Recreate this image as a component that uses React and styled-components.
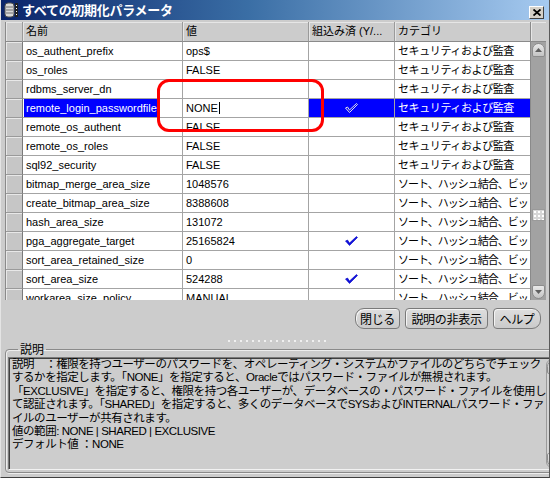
import React from 'react';
import styled, { createGlobalStyle } from 'styled-components';

const FONT = `"Liberation Sans", "Noto Sans CJK JP", sans-serif`;
const COLS = '17px 160px 126px 86px 136px';

const GlobalStyle = createGlobalStyle`
  html, body {
    margin: 0;
    padding: 0;
    background: #cccccc;
  }
  body {
    font-family: ${FONT};
  }
`;

const Window = styled.div`
  width: 550px;
  height: 478px;
  box-sizing: border-box;
  border: 1px solid;
  border-top: 0;
  border-color: #e4e4e4 #5a5a5a #404040 #e4e4e4;
  background: #cccccc;
  display: flex;
  flex-direction: column;
  overflow: hidden;
  font-family: ${FONT};
  position: relative;
`;

const TitleBar = styled.div`
  height: 20px;
  flex: none;
  display: flex;
  align-items: center;
  gap: 3px;
  padding: 0 5px 0 3px;
  background: linear-gradient(to right, #0a246a 0%, #3a6ea5 45%, #a6caf0 100%);
`;

const TitleText = styled.span`
  flex: 1;
  color: #ffffff;
  font-family: "Noto Sans CJK JP", sans-serif;
  font-weight: 700;
  font-size: 13px;
  line-height: 20px;
  letter-spacing: -0.3px;
`;

const CloseButton = styled.div`
  align-self: flex-end;
  margin-bottom: 1px;
  width: 15px;
  height: 13px;
  box-sizing: border-box;
  background: #d4d0c8;
  border: 1px solid;
  border-color: #ffffff #404040 #404040 #ffffff;
  display: flex;
  align-items: center;
  justify-content: center;
`;

const Body = styled.div`
  flex: 1;
  display: flex;
  flex-direction: column;
  padding: 2px 3px 0 4px;
`;

const TableArea = styled.div`
  height: 278px;
  flex: none;
  display: flex;
  border-left: 1px solid #8a8a8a;
`;

const Grid = styled.div`
  width: 525px;
  overflow: hidden;
  background: #cccccc;
`;

const Row = styled.div`
  display: grid;
  grid-template-columns: ${COLS};
  height: ${p => (p.$header ? 20 : 19)}px;
`;

const HeaderCell = styled.div`
  box-sizing: border-box;
  background: #cccccc;
  border-right: 1px solid #9a9a9a;
  border-bottom: 1px solid #8a8a8a;
  box-shadow: inset 1px 1px 0 #e6e6e6;
  padding: 0 3px;
  font-size: 11px;
  line-height: 19px;
  color: #000;
  white-space: nowrap;
  overflow: hidden;
`;

const RowHead = styled.div`
  box-sizing: border-box;
  background: #c6c6c6;
  border-right: 1px solid #7a7a7a;
  border-bottom: 1px solid #9a9a9a;
  box-shadow: inset 1px 1px 0 #e8e8e8;
`;

const Cell = styled.div`
  box-sizing: border-box;
  background: ${p => (p.$selected ? '#0000ff' : '#ffffff')};
  color: ${p => (p.$selected ? '#ffffff' : '#000000')};
  border-right: 1px solid #a4a4a4;
  border-bottom: 1px solid #a4a4a4;
  padding: 0 3px;
  font-size: 11px;
  line-height: 18px;
  letter-spacing: ${p => p.$spacing || 0}px;
  white-space: nowrap;
  overflow: hidden;
  display: flex;
  align-items: center;
  justify-content: ${p => (p.$center ? 'center' : 'flex-start')};
`;

const Highlight = styled.span`
  background: #0000ff;
  color: #ffffff;
  margin-left: -2px;
  padding: 0 2px 0 2px;
  line-height: 18px;
`;

const Caret = styled.span`
  display: inline-block;
  width: 1px;
  height: 12px;
  background: #000;
  margin-left: 1px;
`;

const ScrollBar = styled.div`
  width: 15px;
  display: flex;
  flex-direction: column;
  background: #a2a2a2;
  border-left: 1px solid #8a8a8a;
`;

const ScrollCorner = styled.div`
  height: 20px;
  flex: none;
  box-sizing: border-box;
  background: #cccccc;
  border-bottom: 1px solid #8a8a8a;
  box-shadow: inset 1px 1px 0 #e6e6e6;
`;

const ScrollTrack = styled.div`
  flex: 1;
  display: flex;
  flex-direction: column;
  align-items: center;
  padding: 1px 0;
`;

const ScrollButton = styled.div`
  width: 13px;
  height: 14px;
  flex: none;
  box-sizing: border-box;
  border-radius: ${p => (p.$down ? '2px 2px 7px 7px' : '7px 7px 2px 2px')};
  background: linear-gradient(#e8e8e8, #c4c4c4);
  border: 1px solid #8c8c8c;
  display: flex;
  align-items: center;
  justify-content: center;
  margin-top: ${p => (p.$down ? 'auto' : '0')};
`;

const Thumb = styled.div`
  width: 13px;
  height: 12px;
  flex: none;
  margin-top: ${p => p.$offset}px;
  box-sizing: border-box;
  background: #d6d6d6;
  border: 1px solid #9a9a9a;
  background-image: radial-gradient(circle, #ffffff 0.8px, transparent 1px);
  background-size: 4px 4px;
`;

const ButtonBar = styled.div`
  display: flex;
  justify-content: flex-end;
  gap: 5px;
  margin-top: 8px;
  padding-right: 5px;
`;

const PillButton = styled.button`
  width: ${p => p.$width}px;
  height: 21px;
  padding: 0;
  box-sizing: border-box;
  font-family: "Noto Sans CJK JP", sans-serif;
  font-size: 12px;
  line-height: 18px;
  letter-spacing: -0.3px;
  color: #000;
  background: linear-gradient(#dedede, #cacaca);
  border: 1px solid #7a7a7a;
  border-radius: ${p => p.$radius};
  box-shadow: inset 1px 1px 0 #f4f4f4;
  cursor: default;
`;

const Splitter = styled.div`
  align-self: center;
  width: 100px;
  height: 2px;
  margin-top: 11px;
  background-image: radial-gradient(circle, #f0f0f0 0.9px, transparent 1.1px);
  background-size: 6px 2px;
`;

const Group = styled.fieldset`
  margin: 0 0 4px 0;
  padding: 0 2px 2px 2px;
  flex: 1;
  border: 1px solid #8a8a8a;
  border-radius: 4px;
  box-shadow: 1px 1px 0 #eeeeee, inset 1px 1px 0 #eeeeee;
  display: flex;
  min-height: 0;
`;

const Legend = styled.legend`
  margin-left: 10px;
  padding: 0 2px;
  font-family: "Noto Sans CJK JP", sans-serif;
  font-size: 12px;
  line-height: 14px;
  color: #000;
`;

const TextBox = styled.div`
  flex: 1;
  display: flex;
  box-sizing: border-box;
  border: 1px solid;
  border-color: #7a7a7a #f2f2f2 #f2f2f2 #7a7a7a;
  box-shadow: inset 1px 1px 0 #404040;
  background: #cdcdcd;
  margin-top: 1px;
  min-height: 0;
`;

const TextContent = styled.div`
  flex: 1;
  padding: 0 0 0 3px;
  font-size: 11.5px;
  line-height: 13.4px;
  letter-spacing: -0.45px;
  white-space: pre;
  overflow: hidden;
  color: #000;
`;

const TextScroll = styled.div`
  width: 15px;
  margin: 1px 1px 1px 0;
  box-sizing: border-box;
  border: 1px solid #9a9a9a;
  border-radius: 6px;
  background: #d4d4d4;
  display: flex;
  flex-direction: column;
  align-items: center;
  justify-content: space-between;
`;

const GripDots = styled.div`
  width: 8px;
  height: 16px;
  background-image: radial-gradient(circle, #f8f8f8 0.9px, transparent 1.2px);
  background-size: 4px 5px;
`;

const RedMark = styled.div`
  position: absolute;
  left: 156px;
  top: 79px;
  width: 167px;
  height: 53px;
  box-sizing: border-box;
  border: 3px solid #ff0000;
  border-radius: 12px;
  pointer-events: none;
`;

function Arrow({ down }) {
  return (
    <svg width="7" height="4" viewBox="0 0 7 4">
      <path d={down ? 'M0 0 L7 0 L3.5 4 Z' : 'M0 4 L7 4 L3.5 0 Z'} fill="#606060" />
    </svg>
  );
}

function Check({ outline }) {
  return (
    <svg width="13" height="10" viewBox="0 0 13 10">
      <path
        d="M0.5 5 L2.5 4 L4.5 7 L11.5 0.5 L12.5 1.5 L4.5 9.5 Z"
        fill={outline ? 'none' : '#1010e0'}
        stroke={outline ? '#e0e0e0' : '#0000c0'}
        strokeWidth={outline ? 1 : 0.6}
        strokeLinejoin="round"
      />
    </svg>
  );
}

function AppIcon() {
  return (
    <svg width="15" height="16" viewBox="0 0 15 16">
      <rect x="1" y="1" width="9" height="14" rx="3" fill="#d8d8d8" stroke="#505050" />
      <path d="M2 5 H9 M2 8 H9 M2 11 H9" stroke="#707070" />
      <rect x="11" y="1" width="3" height="14" fill="#202020" />
      <path d="M12.5 3 V4 M12.5 6 V7 M12.5 9 V10 M12.5 12 V13" stroke="#ffffff" />
    </svg>
  );
}

const SEC = 'セキュリティおよび監査';
const SORT = 'ソート、ハッシュ結合、ビッ';

const rows = [
  { name: 'os_authent_prefix', value: 'ops$', cat: SEC },
  { name: 'os_roles', value: 'FALSE', cat: SEC },
  { name: 'rdbms_server_dn', value: '', cat: SEC },
  { name: 'remote_login_passwordfile', value: 'NONE', cat: SEC, selected: true, builtIn: true },
  { name: 'remote_os_authent', value: 'FALSE', cat: SEC },
  { name: 'remote_os_roles', value: 'FALSE', cat: SEC },
  { name: 'sql92_security', value: 'FALSE', cat: SEC },
  { name: 'bitmap_merge_area_size', value: '1048576', cat: SORT },
  { name: 'create_bitmap_area_size', value: '8388608', cat: SORT },
  { name: 'hash_area_size', value: '131072', cat: SORT },
  { name: 'pga_aggregate_target', value: '25165824', cat: SORT, builtIn: true },
  { name: 'sort_area_retained_size', value: '0', cat: SORT },
  { name: 'sort_area_size', value: '524288', cat: SORT, builtIn: true },
  { name: 'workarea_size_policy', value: 'MANUAL', cat: SORT },
];

const description = [
  '説明　：権限を持つユーザーのパスワードを、オペレーティング・システムかファイルのどちらでチェック',
  'するかを指定します。「NONE」を指定すると、Oracleではパスワード・ファイルが無視されます。',
  '「EXCLUSIVE」を指定すると、権限を持つ各ユーザーが、データベースの・パスワード・ファイルを使用し',
  'て認証されます。「SHARED」を指定すると、多くのデータベースでSYSおよびINTERNALパスワード・ファ',
  'イルのユーザーが共有されます。',
  '値の範囲: NONE | SHARED | EXCLUSIVE',
  'デフォルト値 ：NONE',
].join('\n');

export default function App() {
  return (
    <>
      <GlobalStyle />
      <Window>
        <TitleBar>
          <AppIcon />
          <TitleText>すべての初期化パラメータ</TitleText>
          <CloseButton>
            <svg width="8" height="7" viewBox="0 0 8 7">
              <path d="M0.5 0.5 L7.5 6.5 M7.5 0.5 L0.5 6.5" stroke="#000" strokeWidth="1.8" />
            </svg>
          </CloseButton>
        </TitleBar>
        <Body>
          <TableArea>
            <Grid>
              <Row $header>
                <HeaderCell />
                <HeaderCell>名前</HeaderCell>
                <HeaderCell>値</HeaderCell>
                <HeaderCell>組込み済 (Y/...</HeaderCell>
                <HeaderCell>カテゴリ</HeaderCell>
              </Row>
              {rows.map(r => (
                <Row key={r.name}>
                  <RowHead />
                  <Cell>{r.selected ? <Highlight>{r.name}</Highlight> : r.name}</Cell>
                  <Cell>
                    {r.value}
                    {r.selected && <Caret />}
                  </Cell>
                  <Cell $center $selected={r.selected}>
                    {r.builtIn && <Check outline={r.selected} />}
                  </Cell>
                  <Cell $spacing={r.cat === SORT ? -1 : -0.4} $selected={r.selected}>
                    {r.cat}
                  </Cell>
                </Row>
              ))}
            </Grid>
            <ScrollBar>
              <ScrollCorner />
              <ScrollTrack>
                <ScrollButton>
                  <Arrow />
                </ScrollButton>
                <Thumb $offset={152} />
                <ScrollButton $down>
                  <Arrow down />
                </ScrollButton>
              </ScrollTrack>
            </ScrollBar>
          </TableArea>
          <ButtonBar>
            <PillButton $width={45} $radius="9px 4px 4px 9px">閉じる</PillButton>
            <PillButton $width={83} $radius="4px">説明の非表示</PillButton>
            <PillButton $width={48} $radius="4px 9px 9px 4px">ヘルプ</PillButton>
          </ButtonBar>
          <Splitter />
          <Group>
            <Legend>説明</Legend>
            <TextBox>
              <TextContent>{description}</TextContent>
              <TextScroll>
                <ScrollButton>
                  <Arrow />
                </ScrollButton>
                <GripDots />
                <ScrollButton $down>
                  <Arrow down />
                </ScrollButton>
              </TextScroll>
            </TextBox>
          </Group>
        </Body>
        <RedMark />
      </Window>
    </>
  );
}
